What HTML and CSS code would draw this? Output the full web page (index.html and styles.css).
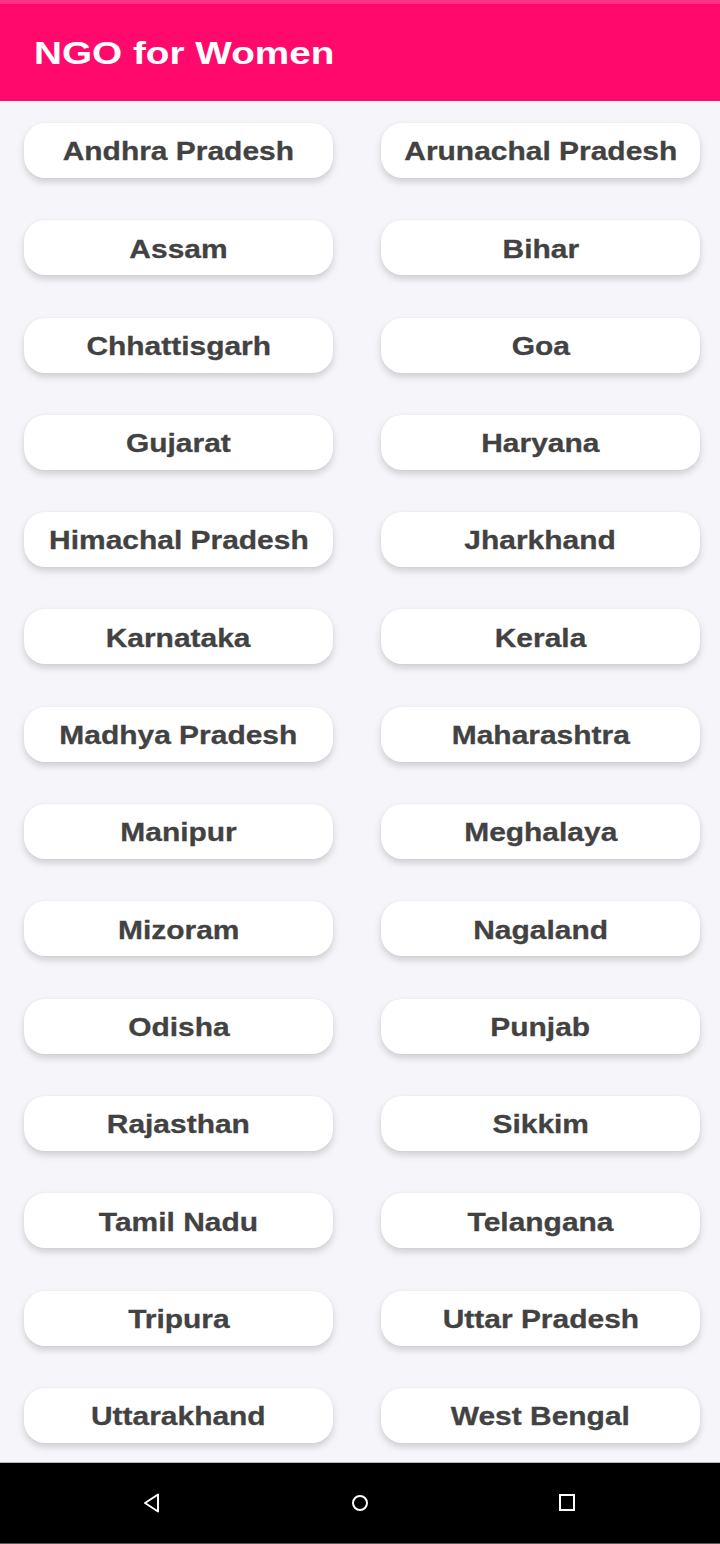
FILE: index.html
```html
<!DOCTYPE html>
<html lang="en">
<head>
<meta charset="utf-8">
<title>NGO for Women</title>
<link rel="stylesheet" href="styles.css">
</head>
<body>
<div class="app">
  <div class="status"></div>
  <header class="appbar"><h1 class="title"><span>NGO for Women</span></h1></header>
  <main class="content">
    <div class="grid">
      <button class="state"><span>Andhra Pradesh</span></button>
      <button class="state"><span>Arunachal Pradesh</span></button>
      <button class="state"><span>Assam</span></button>
      <button class="state"><span>Bihar</span></button>
      <button class="state"><span>Chhattisgarh</span></button>
      <button class="state"><span>Goa</span></button>
      <button class="state"><span>Gujarat</span></button>
      <button class="state"><span>Haryana</span></button>
      <button class="state"><span>Himachal Pradesh</span></button>
      <button class="state"><span>Jharkhand</span></button>
      <button class="state"><span>Karnataka</span></button>
      <button class="state"><span>Kerala</span></button>
      <button class="state"><span>Madhya Pradesh</span></button>
      <button class="state"><span>Maharashtra</span></button>
      <button class="state"><span>Manipur</span></button>
      <button class="state"><span>Meghalaya</span></button>
      <button class="state"><span>Mizoram</span></button>
      <button class="state"><span>Nagaland</span></button>
      <button class="state"><span>Odisha</span></button>
      <button class="state"><span>Punjab</span></button>
      <button class="state"><span>Rajasthan</span></button>
      <button class="state"><span>Sikkim</span></button>
      <button class="state"><span>Tamil Nadu</span></button>
      <button class="state"><span>Telangana</span></button>
      <button class="state"><span>Tripura</span></button>
      <button class="state"><span>Uttar Pradesh</span></button>
      <button class="state"><span>Uttarakhand</span></button>
      <button class="state"><span>West Bengal</span></button>
    </div>
  </main>
  <nav class="navbar">
    <svg class="nav-icon" width="20" height="20" viewBox="0 0 20 20"><path d="M15 1.5 L15 18.5 L2 10 Z" fill="none" stroke="#fff" stroke-width="2" stroke-linejoin="round"/></svg>
    <svg class="nav-icon" width="20" height="20" viewBox="0 0 20 20"><circle cx="10" cy="10" r="7" fill="none" stroke="#fff" stroke-width="2"/></svg>
    <svg class="nav-icon" width="20" height="20" viewBox="0 0 20 20"><rect x="3" y="2" width="14" height="15" fill="none" stroke="#fff" stroke-width="2"/></svg>
  </nav>
</div>
</body>
</html>
```

FILE: styles.css
```css
* { box-sizing: border-box; }
html, body { margin: 0; padding: 0; }
body {
  background: #f6f6fa;
  font-family: "Liberation Sans", Arial, sans-serif;
  width: 720px;
  height: 1544px;
  overflow: hidden;
}
.app {
  display: flex;
  flex-direction: column;
  height: 1544px;
}
.status {
  height: 4px;
  background: #ff3088;
}
.appbar {
  height: 97px;
  background: #ff0a6c;
  display: flex;
  align-items: center;
  padding-left: 34px;
}
.title {
  margin: 0;
  color: #ffffff;
  font-size: 32px;
  font-weight: 700;
  line-height: 1;
}
.title span {
  display: inline-block;
  transform: scaleX(1.21);
  transform-origin: left center;
}
.content {
  flex: 1;
  padding: 22px 20px 0 24px;
  overflow: hidden;
}
.grid {
  display: grid;
  grid-template-columns: 309px 319px;
  grid-auto-rows: 55px;
  column-gap: 48px;
  row-gap: 42.3px;
}
.state {
  border: none;
  margin: 0;
  padding: 2px 0 0 0;
  background: #ffffff;
  border-radius: 21px;
  box-shadow: 0 4px 7px rgba(0, 0, 0, 0.16), 0 0 2px rgba(0, 0, 0, 0.05);
  display: flex;
  align-items: center;
  justify-content: center;
  font-family: "Liberation Sans", Arial, sans-serif;
  font-size: 26.5px;
  font-weight: 700;
  color: #424242;
  line-height: 1;
  -webkit-text-stroke: 0.3px #424242;
}
.state span {
  display: inline-block;
  transform: scaleX(1.13);
  white-space: nowrap;
}
.navbar {
  height: 82px;
  background: #000;
  border-top: 1px solid #b8b8b8;
  border-bottom: 1px solid #555;
  display: flex;
  align-items: center;
}
.nav-icon {
  display: block;
}
.nav-icon:nth-child(1) { margin-left: 143px; }
.nav-icon:nth-child(2) { margin-left: 187px; }
.nav-icon:nth-child(3) { margin-left: 187px; }
```
